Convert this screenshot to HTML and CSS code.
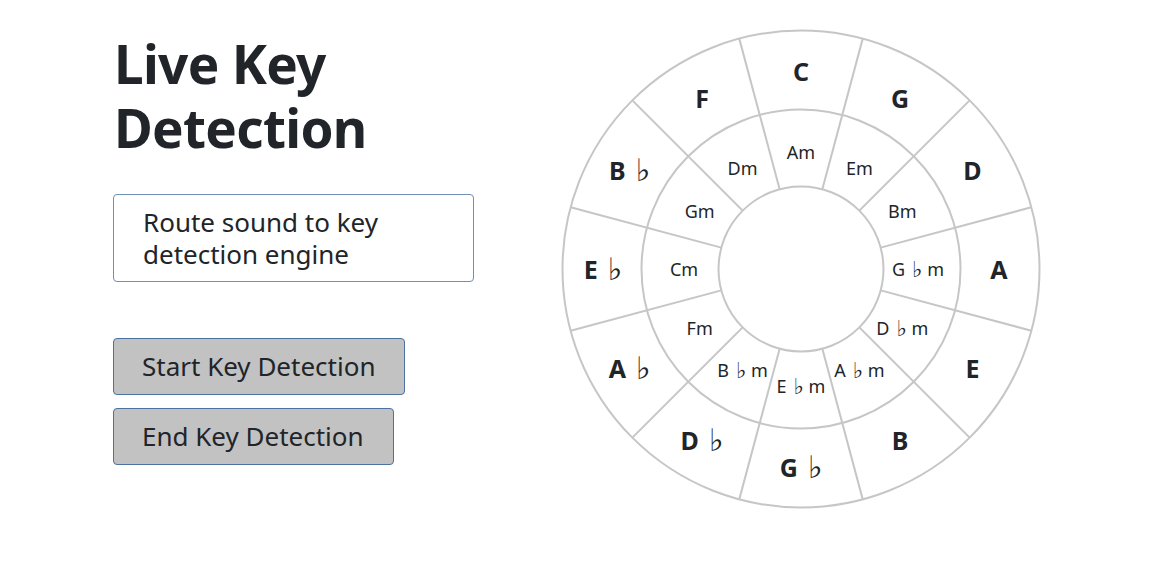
FILE: index.html
```html
<!DOCTYPE html>
<html>

<head>
    <title>Live Key Detection</title>
    <link rel="stylesheet" href="styles.css">
</head>

<body>
    <div class="page">
        <div class="controls">
            <h1 class="title">Live Key Detection</h1>
            <div class="route">Route sound to key detection engine</div>
            <button class="btn start">Start Key Detection</button>
            <button class="btn end">End Key Detection</button>
        </div>

        <svg class="wheel" width="480" height="482" viewBox="-240 -240 480 482">
            <g class="rings">
                <circle r="238.5"></circle>
                <circle r="159.5"></circle>
                <circle r="82.5"></circle>
            </g>
            <g class="spokes" id="spokes"></g>
            <g class="majors" id="majors"></g>
            <g class="minors" id="minors"></g>
        </svg>
    </div>

    <script>
        // "b" marks a flat
        var majors = ["C", "G", "D", "A", "E", "B", "Gb", "Db", "Ab", "Eb", "Bb", "F"];
        var minors = ["Am", "Em", "Bm", "Gbm", "Dbm", "Abm", "Ebm", "Bbm", "Fm", "Cm", "Gm", "Dm"];
        var svgNs = "http://www.w3.org/2000/svg";

        var spokes = document.getElementById("spokes");
        for (var i = 0; i < 12; i++) {
            var a = (15 + i * 30) * Math.PI / 180;
            var line = document.createElementNS(svgNs, "line");
            line.setAttribute("x1", (82.5 * Math.sin(a)).toFixed(2));
            line.setAttribute("y1", (-82.5 * Math.cos(a)).toFixed(2));
            line.setAttribute("x2", (238.5 * Math.sin(a)).toFixed(2));
            line.setAttribute("y2", (-238.5 * Math.cos(a)).toFixed(2));
            spokes.appendChild(line);
        }

        function addLabels(groupId, names, r) {
            var group = document.getElementById(groupId);
            for (var i = 0; i < names.length; i++) {
                var a = i * 30 * Math.PI / 180;
                var t = document.createElementNS(svgNs, "text");
                t.setAttribute("x", (r * Math.sin(a)).toFixed(2));
                t.setAttribute("y", (-r * Math.cos(a)).toFixed(2));

                var name = names[i];
                t.appendChild(document.createTextNode(name.charAt(0)));
                if (name.charAt(1) === "b") {
                    var flat = document.createElementNS(svgNs, "tspan");
                    flat.setAttribute("class", "flat");
                    flat.textContent = "\u00a0\u266d";
                    t.appendChild(flat);
                    name = name.slice(1);
                }
                var rest = name.slice(1);
                if (rest) {
                    t.appendChild(document.createTextNode((name !== names[i] ? "\u00a0" : "") + rest));
                }
                group.appendChild(t);
            }
        }

        addLabels("majors", majors, 198);
        addLabels("minors", minors, 117);
    </script>
</body>

</html>
```

FILE: styles.css
```css
body,
html {
    margin: 0;
    padding: 0;
    background-color: #fff;
    color: #212529;
    font-family: "Noto Sans", "DejaVu Sans", sans-serif;
}

.page {
    display: flex;
    align-items: flex-start;
    padding: 29px 0 0 113px;
}

.controls {
    width: 361px;
    display: flex;
    flex-direction: column;
    align-items: flex-start;
    margin-right: 87px;
}

.title {
    margin: 3px 0 0 1px;
    font-size: 53px;
    line-height: 64px;
    font-weight: 700;
    letter-spacing: -0.7px;
}

.route {
    box-sizing: border-box;
    width: 361px;
    height: 88px;
    margin-top: 34px;
    padding: 11px 20px 0 29px;
    border: 1px solid #6f8fb3;
    border-radius: 4px;
    font-size: 26px;
    line-height: 32px;
}

.btn {
    box-sizing: border-box;
    height: 57px;
    margin: 0;
    padding: 0 29px 2px 28px;
    background-color: #c2c2c2;
    border: 1px solid #4b72a0;
    border-radius: 4px;
    color: #212529;
    font-family: "Noto Sans", "DejaVu Sans", sans-serif;
    font-size: 26px;
}

.start {
    margin-top: 56px;
}

.end {
    margin-top: 13px;
}

.wheel {
    display: block;
}

.rings circle {
    fill: none;
    stroke: #c6c6c6;
    stroke-width: 2;
}

.spokes line {
    stroke: #c6c6c6;
    stroke-width: 2;
}

.wheel text {
    fill: #212529;
    text-anchor: middle;
    dominant-baseline: central;
}

.majors text {
    font-size: 25px;
    font-weight: 700;
}

.minors text {
    font-size: 18px;
}

.wheel .flat {
    font-family: "DejaVu Sans", sans-serif;
    font-weight: 400;
}

.majors .flat {
    font-size: 31px;
}

.minors .flat {
    font-size: 22px;
}
```
